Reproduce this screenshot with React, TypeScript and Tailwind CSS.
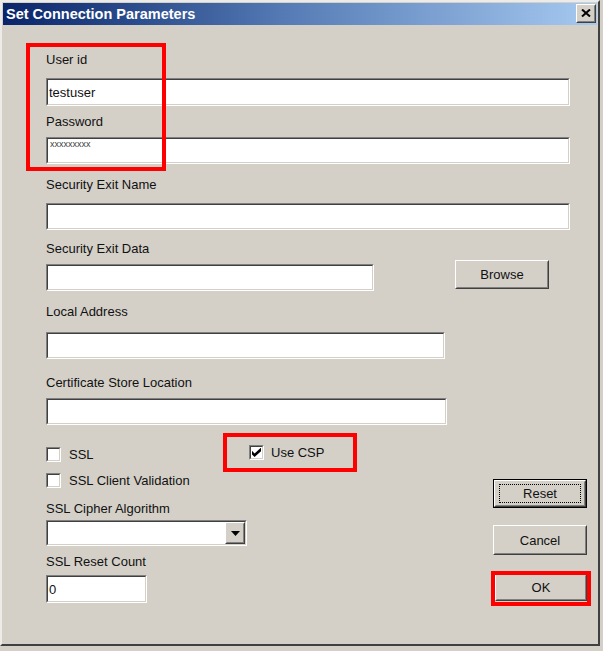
import React from "react";

function Sunken({ className, children }: { className: string; children?: React.ReactNode }) {
  return (
    <div className={`flex border border-t-[#808080] border-l-[#808080] border-b-white border-r-white ${className}`}>
      <div className="flex flex-1 items-center border border-t-[#404040] border-l-[#404040] border-b-[#d4d0c8] border-r-[#d4d0c8] bg-white">
        {children}
      </div>
    </div>
  );
}

function Raised({ className, children }: { className: string; children?: React.ReactNode }) {
  return (
    <div className={`flex border border-t-white border-l-white border-b-[#404040] border-r-[#404040] ${className}`}>
      <div className="flex flex-1 items-center justify-center border border-t-[#d4d0c8] border-l-[#d4d0c8] border-b-[#808080] border-r-[#808080] bg-[#d4d0c8]">
        {children}
      </div>
    </div>
  );
}

function Check({ checked }: { checked?: boolean }) {
  return (
    <div className="flex h-[15px] w-[15px] border border-t-[#808080] border-l-[#808080] border-b-white border-r-white">
      <div className="flex flex-1 items-center justify-center border border-t-[#404040] border-l-[#404040] border-b-[#d4d0c8] border-r-[#d4d0c8] bg-white">
        {checked && (
          <svg width="9" height="9" viewBox="0 0 7 7">
            <path d="M0 2.2 L2 4.2 L7 -0.3 L7 2.6 L2 7 L0 5 Z" fill="#000" />
          </svg>
        )}
      </div>
    </div>
  );
}

function Label({ children, className = "" }: { children: React.ReactNode; className?: string }) {
  return <div className={`h-[15px] leading-[15px] ${className}`}>{children}</div>;
}

export default function App() {
  return (
    <div className="relative h-[651px] w-[603px] overflow-hidden bg-[#d4d0c8] font-['Liberation_Sans',Arial,sans-serif] text-[13px] text-[#111]">
      <div className="flex h-[646px] w-[600px] flex-col border-2 border-t-[#ecebe7] border-l-[#ecebe7] border-r-[#404040] border-b-[#404040] p-[1px]">
        {/* Title bar */}
        <div className="flex h-[22px] shrink-0 items-center bg-linear-to-r from-[#0a246a] via-[#5a7fb8] to-[#a6caf0] pl-[3px]">
          <span className="text-[14.5px] font-bold leading-[22px] text-white">Set Connection Parameters</span>
          <Raised className="mb-[2px] ml-auto mr-[1px] h-[19px] w-[20px]">
            <svg width="10" height="8" viewBox="0 0 10 8">
              <path d="M1 0.5 L9 7.5 M9 0.5 L1 7.5" stroke="#000" strokeWidth="2" />
            </svg>
          </Raised>
        </div>

        {/* Body */}
        <div className="flex flex-col pl-[43px]">
          <Label className="mt-[27px]">User id</Label>
          <Sunken className="mt-[11px] h-[28px] w-[524px]">
            <span className="pl-[1px] leading-[15px]">testuser</span>
          </Sunken>
          <Label className="mt-[8px]">Password</Label>
          <div className="mt-[8px] flex h-[27px] w-[524px] border border-t-[#808080] border-l-[#808080] border-b-white border-r-white">
            <div className="flex flex-1 items-start border border-t-[#404040] border-l-[#404040] border-b-[#d4d0c8] border-r-[#d4d0c8] bg-white pl-[2px] pt-[1px]">
              <span className="text-[9px] leading-[9px] text-[#404040]">xxxxxxxxx</span>
            </div>
          </div>
          <Label className="mt-[13px]">Security Exit Name</Label>
          <Sunken className="mt-[11px] h-[27px] w-[524px]" />
          <Label className="mt-[11px]">Security Exit Data</Label>
          <div className="mt-[4px] flex items-start">
            <Sunken className="mt-[4px] h-[27px] w-[328px]" />
            <Raised className="ml-[81px] h-[29px] w-[94px]">
              <span className="leading-[15px]">Browse</span>
            </Raised>
          </div>
          <Label className="mt-[13px]">Local Address</Label>
          <Sunken className="mt-[13px] h-[27px] w-[399px]" />
          <Label className="mt-[16px]">Certificate Store Location</Label>
          <Sunken className="mt-[8px] h-[27px] w-[401px]" />

          {/* Lower section */}
          <div className="flex">
            <div className="flex w-[202px] flex-col">
              <div className="mt-[22px] flex h-[15px] items-center">
                <Check />
                <span className="ml-[8px] leading-[15px]">SSL</span>
              </div>
              <div className="mt-[11px] flex h-[15px] items-center">
                <Check />
                <span className="ml-[8px] leading-[15px]">SSL Client Validation</span>
              </div>
              <Label className="mt-[13px]">SSL Cipher Algorithm</Label>
              <div className="mt-[4px] flex h-[26px] w-[201px] border border-t-[#808080] border-l-[#808080] border-b-white border-r-white">
                <div className="flex flex-1 items-stretch justify-end border border-t-[#404040] border-l-[#404040] border-b-[#d4d0c8] border-r-[#d4d0c8] bg-white">
                  <Raised className="w-[20px]">
                    <svg width="9" height="5" viewBox="0 0 9 5">
                      <path d="M0 0 L9 0 L4.5 5 Z" fill="#000" />
                    </svg>
                  </Raised>
                </div>
              </div>
              <Label className="mt-[8px]">SSL Reset Count</Label>
              <Sunken className="mt-[6px] h-[28px] w-[101px]">
                <span className="pl-[1px] leading-[15px]">0</span>
              </Sunken>
            </div>

            <div className="flex w-[245px] flex-col">
              <div className="mt-[20px] flex h-[15px] items-center pl-[1px]">
                <Check checked />
                <span className="ml-[7px] leading-[15px]">Use CSP</span>
              </div>
            </div>

            <div className="flex w-[94px] flex-col">
              <div className="mt-[54px] flex h-[29px] w-[94px] border border-black">
                <div className="relative flex flex-1 border border-t-white border-l-white border-b-[#404040] border-r-[#404040]">
                  <div className="flex flex-1 items-center justify-center border border-t-[#d4d0c8] border-l-[#d4d0c8] border-b-[#808080] border-r-[#808080] px-[3px] py-[2px]">
                    <div className="flex h-full w-full items-center justify-center border border-dotted border-black">
                      <span className="leading-[15px]">Reset</span>
                    </div>
                  </div>
                </div>
              </div>
              <Raised className="mt-[17px] h-[30px] w-[94px]">
                <span className="leading-[15px]">Cancel</span>
              </Raised>
              <Raised className="ml-[2px] mt-[19px] h-[27px] w-[92px]">
                <span className="leading-[15px]">OK</span>
              </Raised>
            </div>
          </div>
        </div>
      </div>

      {/* Red annotation boxes */}
      <div className="absolute left-[26px] top-[43px] h-[128px] w-[140px] border-4 border-[#ff0000]" />
      <div className="absolute left-[223px] top-[433px] h-[39px] w-[134px] border-4 border-[#ff0000]" />
      <div className="absolute left-[491px] top-[571px] h-[35px] w-[100px] border-4 border-[#ff0000]" />
    </div>
  );
}
